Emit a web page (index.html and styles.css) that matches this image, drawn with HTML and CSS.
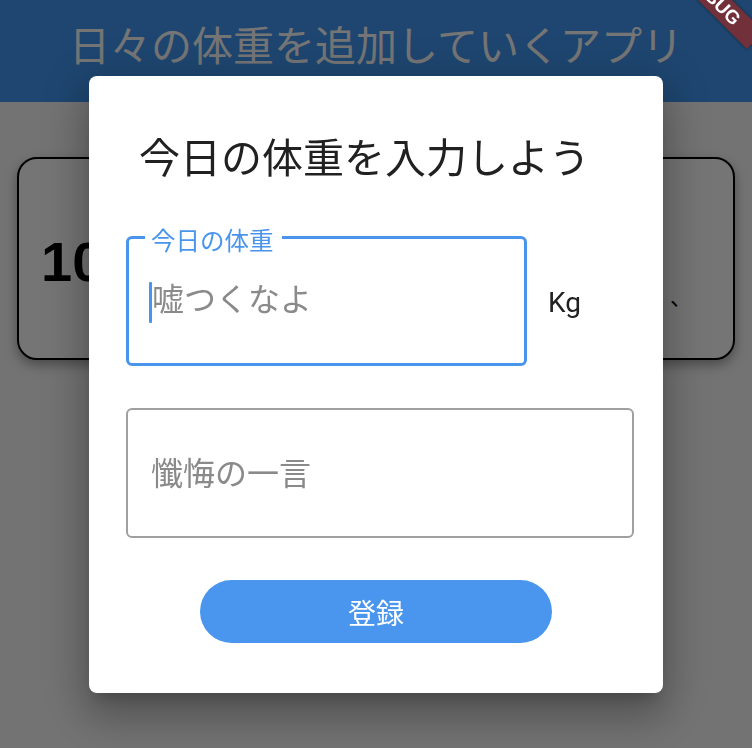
FILE: index.html
```html
<!DOCTYPE html>
<html lang="ja">
<head>
<meta charset="utf-8">
<title>日々の体重を追加していくアプリ</title>
<link rel="stylesheet" href="styles.css">
</head>
<body>
<div class="app">
  <header class="appbar">
    <h1 class="appbar-title">日々の体重を追加していくアプリ</h1>
  </header>
  <main class="content">
    <section class="card">
      <span class="card-weight">10</span>
      <span class="card-note">、</span>
    </section>
  </main>
</div>
<div class="scrim"></div>
<div class="dialog" role="dialog">
  <div class="dialog-body">
    <h2 class="dialog-title">今日の体重を入力しよう</h2>
    <div class="weight-row">
      <div class="field field-focused">
        <span class="field-label">今日の体重</span>
        <span class="caret"></span>
        <span class="field-placeholder">嘘つくなよ</span>
      </div>
      <span class="unit">Kg</span>
    </div>
    <div class="field field-comment">
      <span class="field-placeholder">懺悔の一言</span>
    </div>
  </div>
  <div class="dialog-actions">
    <button class="submit" type="button">登録</button>
  </div>
</div>
<div class="banner-clip"><div class="banner">DEBUG</div></div>
</body>
</html>
```
FILE: styles.css
```css
html, body {
  margin: 0;
  padding: 0;
  width: 752px;
  height: 748px;
  overflow: hidden;
}
body {
  background: #fafafa;
  font-family: "Noto Sans CJK JP", "Noto Sans", sans-serif;
  position: relative;
}
.appbar {
  height: 102px;
  box-sizing: border-box;
  padding-top: 23px;
  background: #4398f3;
  text-align: center;
}
.appbar-title {
  margin: 0;
  font-size: 41px;
  line-height: 1;
  font-weight: 400;
  color: #ffffff;
  white-space: nowrap;
}
.content {
  padding: 55px 17px 0;
}
.card {
  height: 203px;
  box-sizing: border-box;
  border: 2px solid #000;
  border-radius: 20px;
  background: #ffffff;
  box-shadow: 0 5px 12px rgba(0, 0, 0, 0.35);
  display: flex;
  align-items: center;
  padding: 7px 0 0 22px;
}
.card-weight {
  font-family: "Liberation Sans", Arial, sans-serif;
  font-weight: 700;
  font-size: 56px;
  line-height: 1;
  color: #000;
}
.card-note {
  margin-left: auto;
  margin-right: 41px;
  margin-bottom: 52px;
  align-self: flex-end;
  font-size: 22px;
  line-height: 1;
  color: #000;
}
.scrim {
  position: fixed;
  inset: 0;
  background: rgba(0, 0, 0, 0.54);
}
.dialog {
  position: absolute;
  left: 89px;
  top: 76px;
  width: 574px;
  height: 617px;
  box-sizing: border-box;
  padding-top: 59px;
  background: #fff;
  border-radius: 8px;
  box-shadow: 0 24px 38px 3px rgba(0, 0, 0, 0.18),
              0 9px 46px 8px rgba(0, 0, 0, 0.14),
              0 11px 15px -7px rgba(0, 0, 0, 0.2);
}
.dialog-body {
  padding: 0 29px 0 37px;
}
.dialog-title {
  margin: 0 0 61px 13px;
  font-size: 41px;
  line-height: 40px;
  font-weight: 400;
  color: #212121;
  white-space: nowrap;
}
.weight-row {
  display: flex;
  align-items: center;
  gap: 21px;
}
.field {
  position: relative;
  box-sizing: border-box;
  height: 130px;
  border-radius: 6px;
  display: flex;
  align-items: center;
}
.field-focused {
  width: 401px;
  border: 3px solid #4a95ec;
  padding: 0 0 8px 20px;
}
.field-label {
  position: absolute;
  left: 16px;
  top: -11px;
  padding: 0 8px 0 6px;
  background: #fff;
  font-size: 24.5px;
  line-height: 1;
  color: #4a95ec;
  white-space: nowrap;
}
.caret {
  width: 3px;
  height: 41px;
  margin-top: 11px;
  background: #4a95ec;
  border-radius: 1px;
}
.field-placeholder {
  font-size: 32px;
  line-height: 1;
  color: #8a8a8a;
  white-space: nowrap;
}
.unit {
  font-family: Roboto, "Noto Sans", sans-serif;
  font-size: 28px;
  line-height: 1;
  margin-top: 4px;
  color: #212121;
}
.field-comment {
  margin-top: 42px;
  border: 2px solid #a0a0a0;
  padding: 0 0 4px 23px;
}
.dialog-actions {
  display: flex;
  justify-content: center;
  margin-top: 42px;
}
.submit {
  width: 352px;
  height: 63px;
  padding: 0;
  border: 0;
  border-radius: 32px;
  background: #4a96ee;
  color: #fff;
  font-family: "Noto Sans CJK JP", sans-serif;
  font-size: 28px;
  line-height: 1;
}
.banner-clip {
  position: absolute;
  top: 0;
  right: 0;
  width: 100px;
  height: 100px;
  overflow: hidden;
}
.banner {
  position: absolute;
  left: 0.5px;
  top: -14.5px;
  width: 120px;
  height: 24px;
  line-height: 24px;
  text-align: center;
  background: #71303a;
  color: #fff;
  font-family: "Liberation Sans", Arial, sans-serif;
  font-weight: 700;
  font-size: 19px;
  transform: rotate(45deg);
  box-shadow: 0 0 3px rgba(0, 0, 0, 0.5);
}
```
